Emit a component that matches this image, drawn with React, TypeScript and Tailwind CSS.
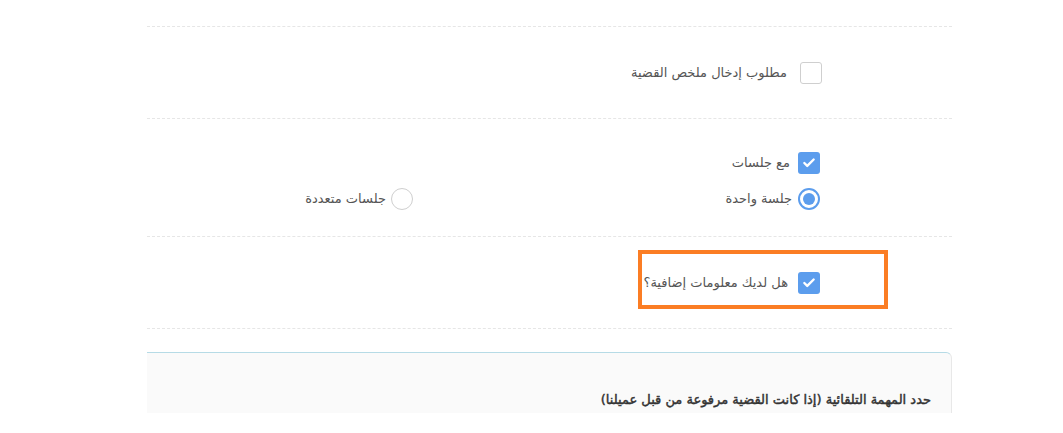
import React, { useState } from 'react';
import { Check } from 'lucide-react';

const Box: React.FC<{ checked: boolean; onClick?: () => void }> = ({ checked, onClick }) => (
    <span
        onClick={onClick}
        className={`flex h-[22px] w-[22px] shrink-0 items-center justify-center rounded-[3px] cursor-pointer ${checked ? 'bg-[#5c9ded]' : 'border border-[#cfcfcf] bg-white'}`}
    >
        {checked && <Check size={14} strokeWidth={4} className="text-white" />}
    </span>
);

const Radio: React.FC<{ checked: boolean; onClick?: () => void }> = ({ checked, onClick }) => (
    <span
        onClick={onClick}
        className={`flex h-[22px] w-[22px] shrink-0 items-center justify-center rounded-full bg-white cursor-pointer ${checked ? 'border-2 border-[#5c9ded]' : 'border border-[#cfcfcf]'}`}
    >
        {checked && <span className="h-[12px] w-[12px] rounded-full bg-[#5c9ded]" />}
    </span>
);

const App: React.FC = () => {
    const [summary, setSummary] = useState(false);
    const [sessions, setSessions] = useState(true);
    const [mode, setMode] = useState<'single' | 'multi'>('single');
    const [extra, setExtra] = useState(true);

    return (
        <div className="min-h-[433px] bg-white" style={{ fontFamily: '"DejaVu Sans", sans-serif' }}>
            <div dir="rtl" className="ml-[147px] w-[805px] pt-[26px] text-[13px] text-[#555]">
                <div className="border-t border-dashed border-[#e6e6e6]" />

                <div className="flex h-[92px] items-center border-b border-dashed border-[#e6e6e6] pr-[130px]">
                    <label className="flex items-center gap-[13px]">
                        <Box checked={summary} onClick={() => setSummary(!summary)} />
                        <span>مطلوب إدخال ملخص القضية</span>
                    </label>
                </div>

                <div className="h-[118px] border-b border-dashed border-[#e6e6e6] pr-[132px] pt-[33px]">
                    <label className="flex items-center gap-[8px]">
                        <Box checked={sessions} onClick={() => setSessions(!sessions)} />
                        <span>مع جلسات</span>
                    </label>
                    <div className="mt-[14px] grid grid-cols-[407px_1fr]">
                        <label className="flex items-center gap-[6px]">
                            <Radio checked={mode === 'single'} onClick={() => setMode('single')} />
                            <span>جلسة واحدة</span>
                        </label>
                        <label className="flex items-center gap-[5px]">
                            <Radio checked={mode === 'multi'} onClick={() => setMode('multi')} />
                            <span>جلسات متعددة</span>
                        </label>
                    </div>
                </div>

                <div className="relative flex h-[92px] items-center border-b border-dashed border-[#e6e6e6] pr-[132px]">
                    <label className="flex items-center gap-[10px]">
                        <Box checked={extra} onClick={() => setExtra(!extra)} />
                        <span>هل لديك معلومات إضافية؟</span>
                    </label>
                    <div className="pointer-events-none absolute right-[64px] top-[13px] h-[59px] w-[250px] border-4 border-[#fb7d24]" />
                </div>

                <div className="mt-[23px] h-[61px] rounded-tr-[6px] border-t border-r border-[#b6dbe6] border-r-[#e8e8e8] bg-[#fafafa] pr-[20px] pt-[37px]">
                    <h4 className="text-[13px] font-normal text-[#333] [-webkit-text-stroke:0.45px_#333]">حدد المهمة التلقائية (إذا كانت القضية مرفوعة من قبل عميلنا)</h4>
                </div>
            </div>
        </div>
    );
};

export default App;
